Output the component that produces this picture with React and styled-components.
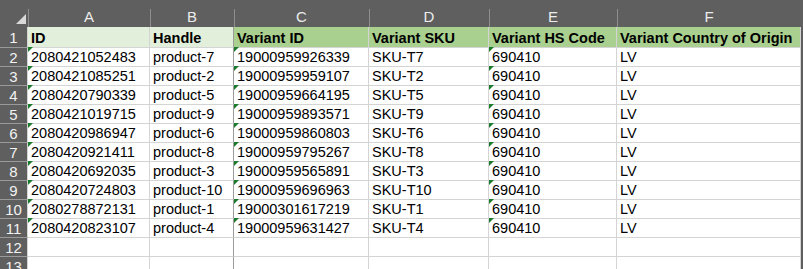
import React from 'react';
import styled, { createGlobalStyle, css } from 'styled-components';

const rows = [
    ['2080421052483', 'product-7', '19000959926339', 'SKU-T7', '690410', 'LV'],
    ['2080421085251', 'product-2', '19000959959107', 'SKU-T2', '690410', 'LV'],
    ['2080420790339', 'product-5', '19000959664195', 'SKU-T5', '690410', 'LV'],
    ['2080421019715', 'product-9', '19000959893571', 'SKU-T9', '690410', 'LV'],
    ['2080420986947', 'product-6', '19000959860803', 'SKU-T6', '690410', 'LV'],
    ['2080420921411', 'product-8', '19000959795267', 'SKU-T8', '690410', 'LV'],
    ['2080420692035', 'product-3', '19000959565891', 'SKU-T3', '690410', 'LV'],
    ['2080420724803', 'product-10', '19000959696963', 'SKU-T10', '690410', 'LV'],
    ['2080278872131', 'product-1', '19000301617219', 'SKU-T1', '690410', 'LV'],
    ['2080420823107', 'product-4', '19000959631427', 'SKU-T4', '690410', 'LV'],
];

const headers = ['ID', 'Handle', 'Variant ID', 'Variant SKU', 'Variant HS Code', 'Variant Country of Origin'];
const letters = ['A', 'B', 'C', 'D', 'E', 'F'];
// columns holding numbers stored as text get the little green flag
const flagged = [0, 2, 4];

export default function App() {
    return (
        <>
            <GlobalStyle />
            <Sheet>
                <Corner />
                {letters.map(l => <ColHeader key={l}>{l}</ColHeader>)}

                <RowHeader $first>1</RowHeader>
                {headers.map((h, i) => (
                    <Cell key={h} $fill={i < 2 ? 'light' : 'dark'} $bold $freeze={i === 1}>{h}</Cell>
                ))}

                {rows.map((r, ri) => (
                    <React.Fragment key={ri}>
                        <RowHeader>{ri + 2}</RowHeader>
                        {r.map((v, ci) => (
                            <Cell key={ci} $flag={flagged.includes(ci)} $freeze={ci === 1}>{v}</Cell>
                        ))}
                    </React.Fragment>
                ))}

                {[12, 13].map(n => (
                    <React.Fragment key={n}>
                        <RowHeader>{n}</RowHeader>
                        {letters.map((l, ci) => <Cell key={l} $freeze={ci === 1} />)}
                    </React.Fragment>
                ))}
            </Sheet>
        </>
    );
}

const GlobalStyle = createGlobalStyle`
    body {
        margin: 0;
        background: #5f5f5f;
        font-family: "Liberation Sans", Arial, sans-serif;
        overflow: hidden;
    }
`

const Sheet = styled.div`
    display: grid;
    grid-template-columns: 28px 122px 84px 135px 120px 128px 184px;
    grid-template-rows: 27px 21px;
    grid-auto-rows: 19px;
    width: 801px;
    background: #5f5f5f;
`

const Corner = styled.div`
    position: relative;
    background: #5f5f5f;
    &::after {
        content: '';
        position: absolute;
        right: 2px;
        bottom: 3px;
        border-left: 10px solid transparent;
        border-bottom: 10px solid #d9d9d9;
    }
`

const ColHeader = styled.div`
    position: relative;
    display: flex;
    align-items: flex-end;
    justify-content: center;
    padding-bottom: 1px;
    box-sizing: border-box;
    color: #ececec;
    font-size: 15px;
    line-height: 18px;
    &::before {
        content: '';
        position: absolute;
        left: 0;
        top: 9px;
        bottom: 0;
        width: 1px;
        background: #8e8e8e;
    }
`

const RowHeader = styled.div`
    display: flex;
    align-items: center;
    justify-content: center;
    box-sizing: border-box;
    border-bottom: 1px solid #9a9a9a;
    border-right: 1px solid #d4d4d4;
    color: #f2f2f2;
    font-size: 15px;
    padding-top: ${p => p.$first ? '1px' : '0'};
`

const fills = {
    light: '#e2efda',
    dark: '#a9d08e',
};

const Cell = styled.div`
    position: relative;
    display: flex;
    align-items: flex-end;
    box-sizing: border-box;
    padding: 0 2px 0 3px;
    background: ${p => fills[p.$fill] || '#ffffff'};
    border-right: 1px solid ${p => p.$freeze ? '#9c9c9c' : '#d4d4d4'};
    border-bottom: 1px solid #d4d4d4;
    color: #000;
    font-size: 14.5px;
    font-weight: ${p => p.$bold ? 700 : 400};
    line-height: 17px;
    white-space: nowrap;
    ${p => p.$flag && css`
        &::before {
            content: '';
            position: absolute;
            top: -1px;
            left: 0;
            border-top: 5px solid #1b7a2b;
            border-right: 5px solid transparent;
        }
    `}
`
